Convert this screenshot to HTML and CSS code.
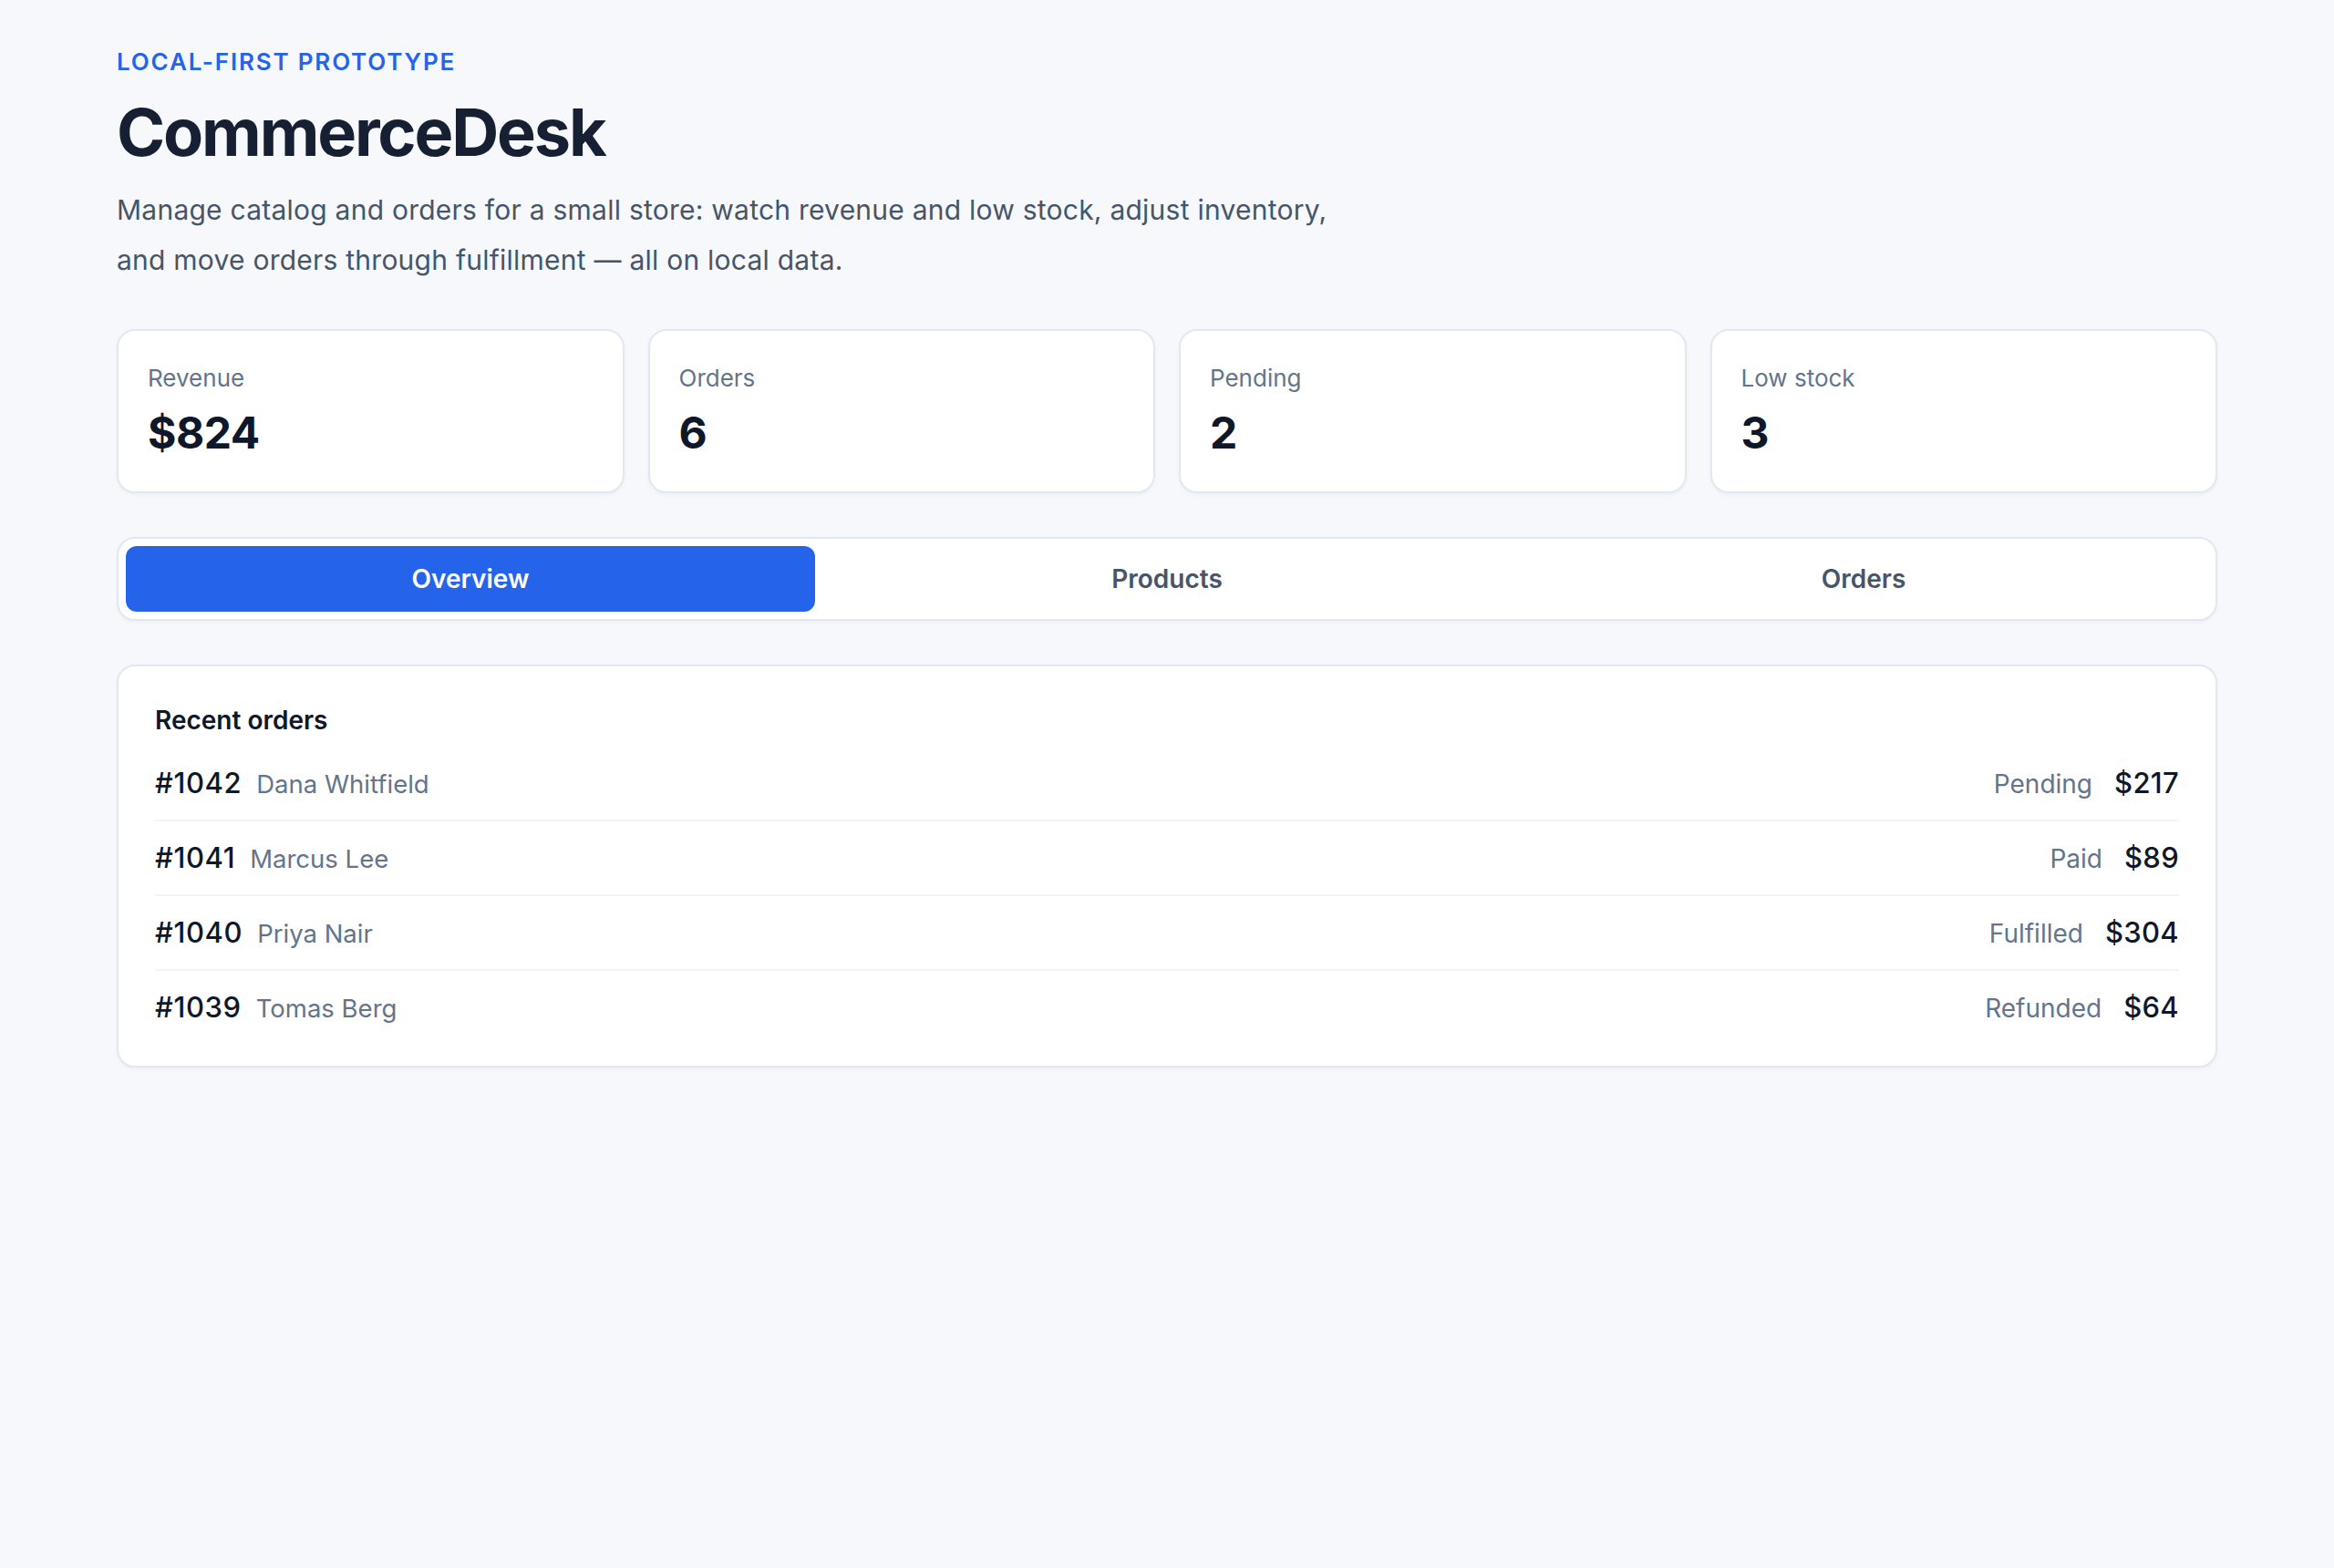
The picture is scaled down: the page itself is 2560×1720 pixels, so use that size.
FILE: index.html
```html
<!DOCTYPE html>
<html lang="en">
<head>
<meta charset="utf-8">
<title>CommerceDesk</title>
<link rel="stylesheet" href="styles.css">
</head>
<body>
<main class="page">
  <header class="hero">
    <p class="eyebrow">LOCAL-FIRST PROTOTYPE</p>
    <h1 class="title">CommerceDesk</h1>
    <p class="lede">Manage catalog and orders for a small store: watch revenue and low stock, adjust inventory, and move orders through fulfillment — all on local data.</p>
  </header>

  <section class="stats">
    <div class="stat"><div class="stat-label">Revenue</div><div class="stat-value">$824</div></div>
    <div class="stat"><div class="stat-label">Orders</div><div class="stat-value">6</div></div>
    <div class="stat"><div class="stat-label">Pending</div><div class="stat-value">2</div></div>
    <div class="stat"><div class="stat-label">Low stock</div><div class="stat-value">3</div></div>
  </section>

  <nav class="tabs">
    <button class="tab tab-active">Overview</button>
    <button class="tab">Products</button>
    <button class="tab">Orders</button>
  </nav>

  <section class="panel">
    <h2 class="panel-title">Recent orders</h2>
    <ul class="orders">
      <li class="order">
        <div class="order-left"><span class="order-id">#1042</span><span class="order-name">Dana Whitfield</span></div>
        <div class="order-right"><span class="order-status">Pending</span><span class="order-total">$217</span></div>
      </li>
      <li class="order">
        <div class="order-left"><span class="order-id">#1041</span><span class="order-name">Marcus Lee</span></div>
        <div class="order-right"><span class="order-status">Paid</span><span class="order-total">$89</span></div>
      </li>
      <li class="order">
        <div class="order-left"><span class="order-id">#1040</span><span class="order-name">Priya Nair</span></div>
        <div class="order-right"><span class="order-status">Fulfilled</span><span class="order-total">$304</span></div>
      </li>
      <li class="order">
        <div class="order-left"><span class="order-id">#1039</span><span class="order-name">Tomas Berg</span></div>
        <div class="order-right"><span class="order-status">Refunded</span><span class="order-total">$64</span></div>
      </li>
    </ul>
  </section>
</main>
</body>
</html>
```
FILE: styles.css
```css
* { box-sizing: border-box; }

html, body {
  margin: 0;
  padding: 0;
  background: #f6f8fb;
  font-family: Inter, "Noto Sans", "Liberation Sans", sans-serif;
  color: #0f172a;
}

.page {
  max-width: 2560px;
  padding: 48px 128px 64px;
}

.hero { margin: 0; }

.eyebrow {
  margin: 0;
  font-size: 26px;
  line-height: 39px;
  font-weight: 600;
  letter-spacing: 0.07em;
  color: #2563eb;
}

.title {
  margin: 18px 0 0;
  font-size: 72px;
  line-height: 80px;
  font-weight: 700;
  letter-spacing: -0.03em;
  color: #172033;
}

.lede {
  margin: 18px 0 0;
  max-width: 1344px;
  font-size: 30px;
  line-height: 55px;
  letter-spacing: 0.008em;
  color: #475569;
}

.stats {
  margin-top: 48px;
  display: grid;
  grid-template-columns: repeat(4, 1fr);
  gap: 26px;
}

.stat {
  background: #ffffff;
  border: 2px solid #e2e8f0;
  border-radius: 20px;
  padding: 32px 32px 34px;
  box-shadow: 0 2px 4px rgba(15, 23, 42, 0.04);
}

.stat-label {
  font-size: 26px;
  line-height: 39px;
  color: #64748b;
}

.stat-value {
  margin-top: 11px;
  font-size: 48px;
  line-height: 60px;
  font-weight: 700;
  letter-spacing: -0.01em;
  color: #0f172a;
}

.tabs {
  margin-top: 48px;
  display: grid;
  grid-template-columns: repeat(3, 1fr);
  gap: 8px;
  padding: 8px;
  background: #ffffff;
  border: 2px solid #e2e8f0;
  border-radius: 20px;
  box-shadow: 0 2px 4px rgba(15, 23, 42, 0.04);
}

.tab {
  border: 0;
  background: transparent;
  font-family: inherit;
  font-size: 28px;
  line-height: 40px;
  font-weight: 600;
  color: #475569;
  padding: 16px 0;
  border-radius: 12px;
}

.tab-active {
  background: #2563eb;
  color: #ffffff;
}

.panel {
  margin-top: 48px;
  background: #ffffff;
  border: 2px solid #e2e8f0;
  border-radius: 20px;
  padding: 40px 40px 42px;
  box-shadow: 0 2px 4px rgba(15, 23, 42, 0.04);
}

.panel-title {
  margin: 0 0 27px;
  font-size: 28px;
  line-height: 39px;
  font-weight: 600;
  color: #0f172a;
}

.orders {
  list-style: none;
  margin: 0;
  padding: 0;
}

.order {
  display: flex;
  align-items: center;
  justify-content: space-between;
  height: 82px;
  padding: 18px 0;
  border-bottom: 2px solid #f1f5f9;
}

.order:first-child { padding-top: 0; height: 64px; }
.order:last-child { padding-bottom: 0; border-bottom: 0; height: 62px; }

.order-left, .order-right {
  display: flex;
  align-items: baseline;
}

.order-left { gap: 16px; }
.order-right { gap: 24px; }

.order-id {
  font-size: 31px;
  line-height: 44px;
  font-weight: 500;
  letter-spacing: 0.02em;
  color: #0f172a;
}

.order-name {
  font-size: 27.5px;
  line-height: 40px;
  color: #64748b;
}

.order-status {
  font-size: 28px;
  line-height: 40px;
  color: #64748b;
}

.order-total {
  font-size: 31px;
  line-height: 44px;
  font-weight: 500;
  letter-spacing: 0.01em;
  color: #0f172a;
}
```
